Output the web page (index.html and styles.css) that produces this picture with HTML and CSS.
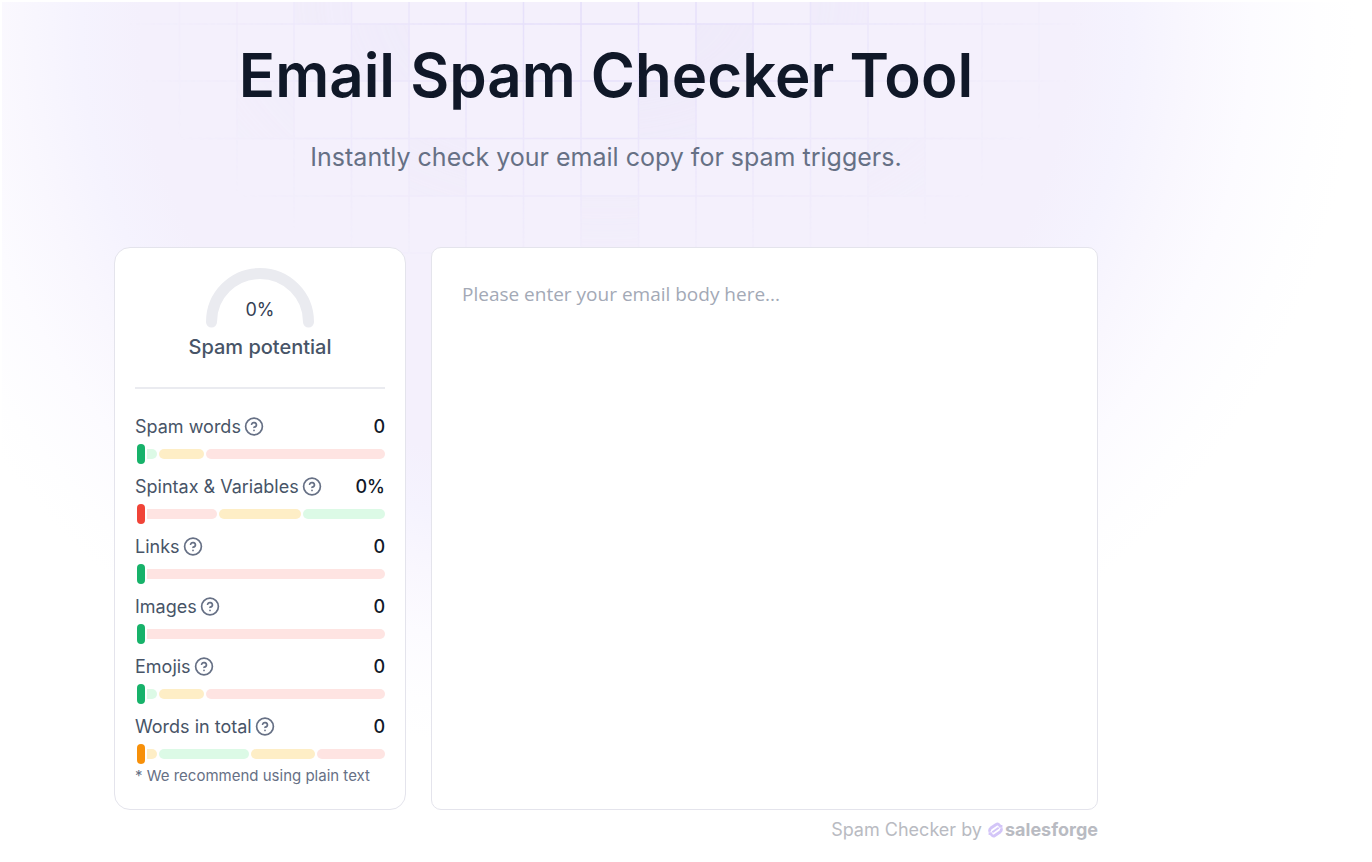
FILE: index.html
```html
<!DOCTYPE html>
<html lang="en">
<head>
<meta charset="utf-8">
<meta name="viewport" content="width=device-width, initial-scale=1">
<title>Email Spam Checker Tool</title>
<link rel="stylesheet" href="styles.css">
</head>

<body>

<svg class="symbols" width="0" height="0" aria-hidden="true">
  <symbol id="help" viewBox="0 0 20 20">
    <g fill="none" stroke="currentColor" stroke-width="1.7" stroke-linecap="round" stroke-linejoin="round">
      <circle cx="10" cy="9.500" r="8.400"/>
      <path d="M7.600 7.200a2.500 2.500 0 0 1 4.850.8c0 1.650-2.450 2.300-2.450 2.300"/>
      <path d="M10 13.400h.01"/>
    </g>
  </symbol>
</svg>

<div class="page">

  <!-- faded grid behind the heading -->
  <svg class="grid" viewBox="0 0 1146 252" width="1146" height="252" aria-hidden="true">
    <g class="grid-cells">
      <path d="M258 0h57v22h-57zM315 22h58v57h-58zM201 79h57v57h-57zM373 136h57v58h-57zM545 194h57v57h-57zM602 79h58v57h-58zM660 22h57v57h-57zM774 0h57v22h-57zM831 136h58v58h-58z"/>
    </g>
    <g class="grid-lines">
      <path d="M29.500 0v252M86.500 0v252M143.500 0v252M201 0v252M258 0v252M315.500 0v252M373 0v252M430 0v252M487.500 0v252M545 0v252M602.500 0v252M660 0v252M717 0v252M774.500 0v252M832 0v252M889 0v252M946 0v252M1003 0v252M1060 0v252"/>
      <path d="M0 22h1146M0 79h1146M0 136.500h1146M0 194h1146M0 251h1146"/>
    </g>
  </svg>

  <div class="container">
    <header class="hero">
      <h1>Email Spam Checker Tool</h1>
      <p>Instantly check your email copy for spam triggers.</p>
    </header>

    <main class="checker">
      <section class="card">
        <div class="score">
          <svg class="gauge" viewBox="0 0 108 60" width="108" height="60">
            <path d="M5.500 54A48.500 48.500 0 0 1 102.500 54" fill="none" stroke="#eaebf0" stroke-width="11" stroke-linecap="round"/>
            <text x="54" y="48" text-anchor="middle">0%</text>
          </svg>
          <h2>Spam potential</h2>
        </div>

        <div class="metrics">
          <div class="metric">
            <div class="metric-head">
              <span>Spam words</span>
              <button type="button" class="help" aria-label="About spam words"><svg><use href="#help"/></svg></button>
              <strong>0</strong>
            </div>
            <div class="bar">
              <i class="green" style="flex-grow: 22"></i>
              <i class="yellow" style="flex-grow: 44"></i>
              <i class="red" style="flex-grow: 178"></i>
              <b class="marker marker-green"></b>
            </div>
          </div>

          <div class="metric">
            <div class="metric-head">
              <span>Spintax &amp; Variables</span>
              <button type="button" class="help" aria-label="About spintax and variables"><svg><use href="#help"/></svg></button>
              <strong>0%</strong>
            </div>
            <div class="bar">
              <i class="red" style="flex-grow: 1"></i>
              <i class="yellow" style="flex-grow: 1"></i>
              <i class="green" style="flex-grow: 1"></i>
              <b class="marker marker-red"></b>
            </div>
          </div>

          <div class="metric">
            <div class="metric-head">
              <span>Links</span>
              <button type="button" class="help" aria-label="About links"><svg><use href="#help"/></svg></button>
              <strong>0</strong>
            </div>
            <div class="bar">
              <i class="red" style="flex-grow: 1"></i>
              <b class="marker marker-green"></b>
            </div>
          </div>

          <div class="metric">
            <div class="metric-head">
              <span>Images</span>
              <button type="button" class="help" aria-label="About images"><svg><use href="#help"/></svg></button>
              <strong>0</strong>
            </div>
            <div class="bar">
              <i class="red" style="flex-grow: 1"></i>
              <b class="marker marker-green"></b>
            </div>
          </div>

          <div class="metric">
            <div class="metric-head">
              <span>Emojis</span>
              <button type="button" class="help" aria-label="About emojis"><svg><use href="#help"/></svg></button>
              <strong>0</strong>
            </div>
            <div class="bar">
              <i class="green" style="flex-grow: 22"></i>
              <i class="yellow" style="flex-grow: 44"></i>
              <i class="red" style="flex-grow: 178"></i>
              <b class="marker marker-green"></b>
            </div>
          </div>

          <div class="metric">
            <div class="metric-head">
              <span>Words in total</span>
              <button type="button" class="help" aria-label="About words in total"><svg><use href="#help"/></svg></button>
              <strong>0</strong>
            </div>
            <div class="bar">
              <i class="yellow" style="flex-grow: 22"></i>
              <i class="green" style="flex-grow: 90"></i>
              <i class="yellow" style="flex-grow: 63"></i>
              <i class="red" style="flex-grow: 68"></i>
              <b class="marker marker-orange"></b>
            </div>
          </div>
        </div>
        <p class="note">* We recommend using plain text</p>
      </section>

      <textarea class="editor" aria-label="Email body" placeholder="Please enter your email body here..."></textarea>
    </main>

    <footer class="credit">
      <span>Spam Checker by</span>
      <a href="#" class="brand">
        <svg viewBox="0 0 15 16" width="15" height="16" aria-hidden="true">
          <g fill="none" stroke="#d3c5f8" stroke-width="2.800">
            <path d="M14.400 4.300H12.200L11.300 3Q9.900 1.200 8.100 2.500L2.900 6Q1 7.500 1.900 9.800"/>
            <path d="M.6 11.700H2.800L3.700 13Q5.100 14.800 6.900 13.500L12.100 10Q14 8.500 13.100 6.200"/>
            <path d="M4.300 10.200 10.700 5.800" stroke-width="2"/>
          </g>
        </svg>
        <span>salesforge</span>
      </a>
    </footer>
  </div>

</div>

</body>
</html>
```
FILE: styles.css
```css
* {
  box-sizing: border-box;
}

body {
  margin: 0;
  background: #fff;
  color: #101828;
  font-family: Inter, "Liberation Sans", sans-serif;
}

h1, h2, p {
  margin: 0;
}

.symbols {
  display: block;
}

.page {
  position: relative;
  min-height: 860px;
  margin: 2px 0 0 2px;
  background: radial-gradient(ellipse 750px 730px at 604px 28px, #f4f0fc 0, #f4f0fc 62%, #f5f3fe 70%, #f9f7fe 78%, #fcfbff 86%, #fefeff 95%, #fff 100%) no-repeat;
}

.grid {
  position: absolute;
  top: 0;
  left: 34px;
  -webkit-mask-image: radial-gradient(ellipse 480px 300px at 570px 0, #000, transparent);
  mask-image: radial-gradient(ellipse 480px 300px at 570px 0, #000, transparent);
}

.grid-cells {
  fill: #e9e4f9;
  opacity: 0.6;
}

.grid-lines {
  fill: none;
  stroke: #e4ddfa;
  stroke-width: 1.5;
}

.container {
  position: relative;
  max-width: 1096px;
  padding-left: 112px;
}

.hero {
  padding: 35px 0 72px;
  text-align: center;
}

.hero h1 {
  font-size: 60px;
  font-weight: 600;
  line-height: 76px;
}

.hero p {
  margin-top: 26px;
  color: #667085;
  font-size: 25px;
  line-height: 36px;
}

.checker {
  display: grid;
  grid-template-columns: 292px 1fr;
  gap: 25px;
}

.card {
  padding: 20px 20px 21px;
  background: #fff;
  border: 1px solid #e4e4ec;
  border-radius: 16px;
}

.score {
  padding-bottom: 25px;
  border-bottom: 2px solid #eaebf0;
  text-align: center;
}

.gauge {
  display: block;
  margin: 0 auto 4px;
}

.gauge text {
  fill: #344054;
  font-size: 18px;
}

.score h2 {
  color: #475467;
  font-size: 20px;
  font-weight: 500;
  line-height: 30px;
}

.metrics {
  display: flex;
  flex-direction: column;
  gap: 8px;
  margin-top: 23px;
}

.metric-head {
  display: flex;
  align-items: center;
  height: 30px;
  margin-bottom: 2px;
  color: #475467;
  font-size: 18px;
  line-height: 28px;
}

.metric-head strong {
  margin-left: auto;
  color: #101828;
  font-weight: 500;
}

.help {
  width: 20px;
  height: 20px;
  margin-left: 3px;
  padding: 0;
  background: none;
  border: 0;
  color: #667085;
  cursor: pointer;
}

.help svg {
  display: block;
  width: 20px;
  height: 20px;
}

.bar {
  position: relative;
  display: flex;
  align-items: center;
  gap: 2px;
  height: 20px;
}

.bar i {
  flex-basis: 0;
  height: 10px;
  border-radius: 5px;
}

.green {
  background: #dcfae6;
}

.yellow {
  background: #feeec6;
}

.red {
  background: #fee4e2;
}

/* current value, sits on top of the scale */
.marker {
  position: absolute;
  top: 0;
  left: 2px;
  width: 8px;
  height: 20px;
  border-radius: 4px;
  box-shadow: 0 0 0 2px #fff;
}

.marker-green {
  background: #17b26a;
}

.marker-red {
  background: #f04438;
}

.marker-orange {
  background: #f79009;
}

.note {
  color: #667085;
  font-size: 15px;
  line-height: 24px;
}

.editor {
  display: block;
  width: 100%;
  height: 100%;
  padding: 30px;
  background: #fff;
  border: 1px solid #e4e4ec;
  border-radius: 10px;
  outline: 0;
  resize: none;
  color: #101828;
  font-family: "Open Sans", "Noto Sans", sans-serif;
  font-size: 19px;
  line-height: 32px;
}

.editor::placeholder {
  color: #a3a9b6;
  opacity: 1;
}

.credit {
  display: flex;
  justify-content: flex-end;
  align-items: center;
  gap: 6px;
  padding: 6px 0;
  color: #b9bbc2;
  font-size: 18px;
  line-height: 28px;
}

.brand {
  display: flex;
  align-items: center;
  gap: 2px;
  color: #b9bbc2;
  font-weight: 700;
  text-decoration: none;
}
```
